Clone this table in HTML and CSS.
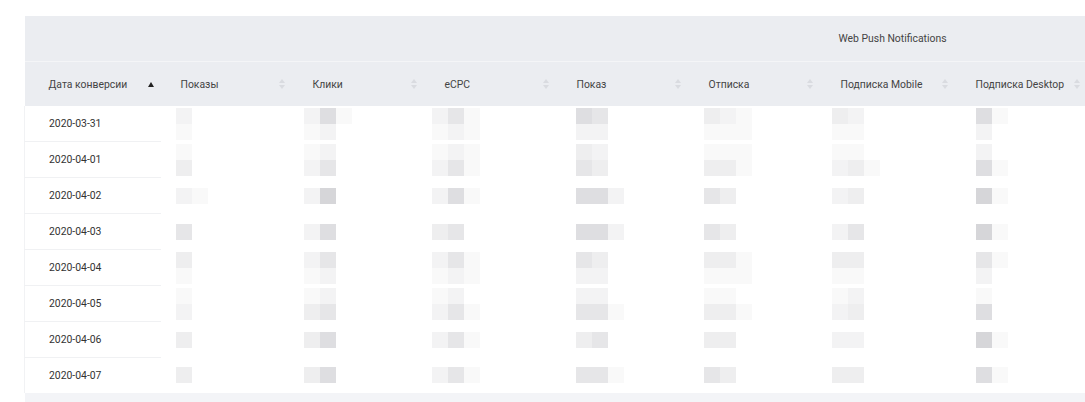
FILE: index.html
```html
<!DOCTYPE html>
<html lang="ru">
<head>
<meta charset="utf-8">
<title>Отчёт</title>
<link rel="stylesheet" href="styles.css">
</head>
<body>
<div class="page">
<table class="report">
<colgroup>
<col class="w-date"><col class="w-col"><col class="w-col"><col class="w-col"><col class="w-col"><col class="w-col"><col class="w-mob"><col class="w-col"><col class="w-col">
</colgroup>
<thead>
<tr class="group-row">
<th colspan="6"></th>
<th colspan="3" class="group-title">Web Push Notifications</th>
</tr>
<tr class="head-row">
<th class="first"><div class="hc"><span>Дата конверсии</span><svg class="sort-on" width="6" height="5" viewBox="0 0 6 5"><path d="M3 0 L6 5 L0 5 Z"/></svg></div></th>
<th><div class="hc"><span>Показы</span><svg class="sort" width="6" height="10" viewBox="0 0 6 10"><path d="M3 0 L6 4 L0 4 Z M0 6 L6 6 L3 10 Z"/></svg></div></th>
<th><div class="hc"><span>Клики</span><svg class="sort" width="6" height="10" viewBox="0 0 6 10"><path d="M3 0 L6 4 L0 4 Z M0 6 L6 6 L3 10 Z"/></svg></div></th>
<th><div class="hc"><span>eCPC</span><svg class="sort" width="6" height="10" viewBox="0 0 6 10"><path d="M3 0 L6 4 L0 4 Z M0 6 L6 6 L3 10 Z"/></svg></div></th>
<th><div class="hc"><span>Показ</span><svg class="sort" width="6" height="10" viewBox="0 0 6 10"><path d="M3 0 L6 4 L0 4 Z M0 6 L6 6 L3 10 Z"/></svg></div></th>
<th><div class="hc"><span>Отписка</span><svg class="sort" width="6" height="10" viewBox="0 0 6 10"><path d="M3 0 L6 4 L0 4 Z M0 6 L6 6 L3 10 Z"/></svg></div></th>
<th><div class="hc"><span>Подписка Mobile</span><svg class="sort" width="6" height="10" viewBox="0 0 6 10"><path d="M3 0 L6 4 L0 4 Z M0 6 L6 6 L3 10 Z"/></svg></div></th>
<th><div class="hc"><span>Подписка Desktop</span><svg class="sort" width="6" height="10" viewBox="0 0 6 10"><path d="M3 0 L6 4 L0 4 Z M0 6 L6 6 L3 10 Z"/></svg></div></th>
<th></th>
</tr>
</thead>
<tbody>
<tr>
<td class="first">2020-03-31</td>
<td><div class="pix k2 o1"><i class="e"></i><i></i><i class="f"></i><i></i></div></td>
<td><div class="pix k3 o2"><i class="e"></i><i class="b"></i><i class="f"></i><i class="f"></i><i class="e"></i><i></i></div></td>
<td><div class="pix k3 o3"><i class="e"></i><i class="c"></i><i class="f"></i><i class="f"></i><i class="e"></i><i class="f"></i></div></td>
<td><div class="pix k3 o4"><i class="b"></i><i class="c"></i><i></i><i class="e"></i><i class="e"></i><i></i></div></td>
<td><div class="pix k3 o5"><i class="d"></i><i class="e"></i><i class="f"></i><i class="f"></i><i class="f"></i><i class="f"></i></div></td>
<td><div class="pix k3 o6"><i class="d"></i><i class="e"></i><i></i><i class="f"></i><i class="f"></i><i></i></div></td>
<td><div class="pix k2 o7"><i class="b"></i><i class="f"></i><i class="e"></i><i></i></div></td>
<td class="tail"></td>
</tr>
<tr>
<td class="first">2020-04-01</td>
<td><div class="pix k2 o1"><i class="f"></i><i></i><i class="d"></i><i></i></div></td>
<td><div class="pix k3 o2"><i class="f"></i><i class="e"></i><i></i><i class="e"></i><i class="c"></i><i></i></div></td>
<td><div class="pix k3 o3"><i class="f"></i><i class="e"></i><i class="f"></i><i class="e"></i><i class="c"></i><i class="f"></i></div></td>
<td><div class="pix k3 o4"><i class="d"></i><i class="e"></i><i></i><i class="c"></i><i class="d"></i><i></i></div></td>
<td><div class="pix k3 o5"><i class="f"></i><i class="f"></i><i class="f"></i><i class="d"></i><i class="d"></i><i class="f"></i></div></td>
<td><div class="pix k3 o6"><i class="f"></i><i class="f"></i><i></i><i class="e"></i><i class="d"></i><i class="f"></i></div></td>
<td><div class="pix k2 o7"><i class="e"></i><i></i><i class="b"></i><i class="f"></i></div></td>
<td class="tail"></td>
</tr>
<tr>
<td class="first">2020-04-02</td>
<td><div class="pix k2 o1"><i class="e"></i><i class="f"></i></div></td>
<td><div class="pix k3 o2"><i class="e"></i><i class="a"></i><i></i></div></td>
<td><div class="pix k3 o3"><i class="e"></i><i class="b"></i><i class="f"></i></div></td>
<td><div class="pix k3 o4"><i class="b"></i><i class="b"></i><i class="e"></i></div></td>
<td><div class="pix k3 o5"><i class="c"></i><i class="d"></i><i></i></div></td>
<td><div class="pix k3 o6"><i class="e"></i><i class="d"></i><i></i></div></td>
<td><div class="pix k2 o7"><i class="a"></i><i class="f"></i></div></td>
<td class="tail"></td>
</tr>
<tr>
<td class="first">2020-04-03</td>
<td><div class="pix k2 o1"><i class="c"></i><i></i></div></td>
<td><div class="pix k3 o2"><i class="e"></i><i class="b"></i><i></i></div></td>
<td><div class="pix k3 o3"><i class="d"></i><i class="c"></i><i></i></div></td>
<td><div class="pix k3 o4"><i class="b"></i><i class="b"></i><i class="e"></i></div></td>
<td><div class="pix k3 o5"><i class="c"></i><i class="d"></i><i></i></div></td>
<td><div class="pix k3 o6"><i class="e"></i><i class="c"></i><i></i></div></td>
<td><div class="pix k2 o7"><i class="a"></i><i class="f"></i></div></td>
<td class="tail"></td>
</tr>
<tr>
<td class="first">2020-04-04</td>
<td><div class="pix k2 o1"><i class="d"></i><i></i><i class="f"></i><i></i></div></td>
<td><div class="pix k3 o2"><i class="e"></i><i class="c"></i><i></i><i class="f"></i><i class="e"></i><i></i></div></td>
<td><div class="pix k3 o3"><i class="e"></i><i class="c"></i><i class="f"></i><i class="f"></i><i class="e"></i><i class="f"></i></div></td>
<td><div class="pix k3 o4"><i class="c"></i><i class="d"></i><i></i><i class="e"></i><i class="e"></i><i></i></div></td>
<td><div class="pix k3 o5"><i class="d"></i><i class="d"></i><i class="f"></i><i class="f"></i><i class="f"></i><i class="f"></i></div></td>
<td><div class="pix k3 o6"><i class="d"></i><i class="d"></i><i></i><i class="f"></i><i class="f"></i><i></i></div></td>
<td><div class="pix k2 o7"><i class="c"></i><i class="f"></i><i class="e"></i><i></i></div></td>
<td class="tail"></td>
</tr>
<tr>
<td class="first">2020-04-05</td>
<td><div class="pix k2 o1"><i class="f"></i><i></i><i class="e"></i><i></i></div></td>
<td><div class="pix k3 o2"><i class="f"></i><i class="e"></i><i></i><i class="d"></i><i class="c"></i><i></i></div></td>
<td><div class="pix k3 o3"><i class="f"></i><i class="e"></i><i></i><i class="e"></i><i class="c"></i><i class="f"></i></div></td>
<td><div class="pix k3 o4"><i class="e"></i><i class="e"></i><i></i><i class="c"></i><i class="c"></i><i class="f"></i></div></td>
<td><div class="pix k3 o5"><i class="f"></i><i class="f"></i><i></i><i class="d"></i><i class="d"></i><i class="f"></i></div></td>
<td><div class="pix k3 o6"><i class="f"></i><i class="e"></i><i></i><i class="e"></i><i class="d"></i><i></i></div></td>
<td><div class="pix k2 o7"><i class="f"></i><i></i><i class="b"></i><i></i></div></td>
<td class="tail"></td>
</tr>
<tr>
<td class="first">2020-04-06</td>
<td><div class="pix k2 o1"><i class="d"></i><i></i></div></td>
<td><div class="pix k3 o2"><i class="d"></i><i class="b"></i><i></i></div></td>
<td><div class="pix k3 o3"><i class="e"></i><i class="c"></i><i class="f"></i></div></td>
<td><div class="pix k3 o4"><i class="d"></i><i class="c"></i><i></i></div></td>
<td><div class="pix k3 o5"><i class="d"></i><i class="d"></i><i></i></div></td>
<td><div class="pix k3 o6"><i class="e"></i><i class="e"></i><i></i></div></td>
<td><div class="pix k2 o7"><i class="a"></i><i class="f"></i></div></td>
<td class="tail"></td>
</tr>
<tr>
<td class="first">2020-04-07</td>
<td><div class="pix k2 o1"><i class="d"></i><i></i></div></td>
<td><div class="pix k3 o2"><i class="d"></i><i class="b"></i><i></i></div></td>
<td><div class="pix k3 o3"><i class="e"></i><i class="c"></i><i class="f"></i></div></td>
<td><div class="pix k3 o4"><i class="c"></i><i class="c"></i><i class="f"></i></div></td>
<td><div class="pix k3 o5"><i class="c"></i><i class="d"></i><i></i></div></td>
<td><div class="pix k3 o6"><i class="d"></i><i class="d"></i><i></i></div></td>
<td><div class="pix k2 o7"><i class="b"></i><i class="f"></i></div></td>
<td class="tail"></td>
</tr>
</tbody>
<tfoot>
<tr class="foot-row"><td colspan="9"></td></tr>
</tfoot>
</table>
</div>
</body>
</html>
```
FILE: styles.css
```css
html, body {
  margin: 0;
  padding: 0;
  background: #ffffff;
  overflow: hidden;
}

.page {
  padding: 16px 0 0 24px;
  width: 1300px;
  font-family: Roboto, "Noto Sans", Arial, sans-serif;
  font-size: 10.4px;
  color: #333333;
}

.report {
  border-collapse: collapse;
  table-layout: fixed;
  width: 1195px;
}

.w-date { width: 136px; }
.w-col { width: 132px; }
.w-mob { width: 135px; }

.report th {
  background: #ebedf1;
  font-weight: 400;
  text-align: left;
  color: #444444;
  padding: 0;
}

.group-row th {
  height: 45px;
  border-bottom: 1px solid #f4f5f7;
}

.group-title {
  padding-left: 18px !important;
  color: #444444;
}

.head-row th {
  height: 44px;
}

.hc {
  display: flex;
  align-items: center;
  justify-content: space-between;
  padding: 0 8px 0 20px;
}

.head-row th.first .hc {
  padding-left: 24px;
  padding-right: 7px;
}

.sort-on { fill: #222222; display: block; }
.sort { fill: #d9dbe0; display: block; }

.report td {
  height: 35px;
  padding: 0;
  vertical-align: middle;
  background: #ffffff;
}

.report td.first {
  padding-left: 24px;
  border-bottom: 1px solid #f0f1f3;
  border-left: 1px solid #f1f2f4;
  color: #333333;
}

.report td.tail {
  border-bottom: 1px solid #f0f1f3;
}

.report tbody tr:last-child td.first,
.report tbody tr:last-child td.tail {
  border-bottom: none;
}

.foot-row td {
  background: #f3f4f7 !important;
  height: 30px !important;
}

.pix {
  display: grid;
  grid-auto-rows: 16px;
}

.k2 { grid-template-columns: repeat(2, 16px); }
.k3 { grid-template-columns: repeat(3, 16px); }

.o1 { margin-left: 15px; }
.o2 { margin-left: 11px; }
.o3 { margin-left: 7px; }
.o4 { margin-left: 19px; }
.o5 { margin-left: 15px; }
.o6 { margin-left: 11px; }
.o7 { margin-left: 20px; }

.pix i { display: block; width: 16px; height: 16px; }
.pix i.a { background: #d6d6d9; }
.pix i.b { background: #dedee1; }
.pix i.c { background: #e6e6e8; }
.pix i.d { background: #eeeeef; }
.pix i.e { background: #f3f3f4; }
.pix i.f { background: #f9f9f9; }
```
